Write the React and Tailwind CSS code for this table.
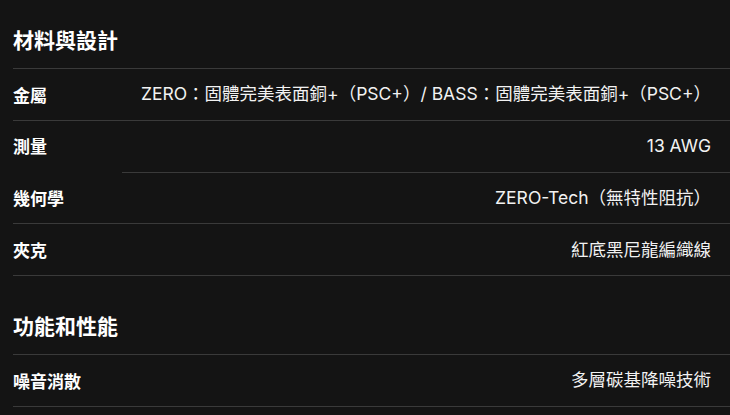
import React from 'react';

const sections = [
  {
    title: '材料與設計',
    rows: [
      { label: '金屬', value: 'ZERO：固體完美表面銅+（PSC+）/ BASS：固體完美表面銅+（PSC+）' },
      { label: '測量', value: '13 AWG' },
      { label: '幾何學', value: 'ZERO-Tech（無特性阻抗）', shortLine: true },
      { label: '夾克', value: '紅底黑尼龍編織線' }
    ]
  },
  {
    title: '功能和性能',
    rows: [{ label: '噪音消散', value: '多層碳基降噪技術' }]
  }
];

const font = { fontFamily: 'Inter, "Noto Sans CJK TC", sans-serif' };

const SpecRow = ({ label, value, shortLine }) => (
  <>
    <div
      className={`h-px bg-[#3a3a3a] ${shortLine ? 'ml-[109px]' : ''}`}
    />
    <div className="h-[50.75px] flex items-center justify-between pr-[19px]">
      <span className="text-[17px] font-bold text-white font-['Noto_Sans_CJK_TC',sans-serif]">
        {label}
      </span>
      <span className="text-[17.5px] text-[#f2f2f2] font-['Inter','Noto_Sans_CJK_TC',sans-serif]">
        {value}
      </span>
    </div>
  </>
);

export default function App() {
  return (
    <div className="w-[730px] h-[415px] bg-[#141414] overflow-hidden pl-[13px]" style={font}>
      {sections.map((section, i) => (
        <div key={section.title} className={i > 0 ? 'mt-[10px]' : ''}>
          <h2 className="pt-[25px] pb-[15px] text-[21px] leading-[28px] font-bold text-white font-['Noto_Sans_CJK_TC',sans-serif]">
            {section.title}
          </h2>
          {section.rows.map((row) => (
            <SpecRow key={row.label} {...row} />
          ))}
          <div className="h-px bg-[#3a3a3a]" />
        </div>
      ))}
    </div>
  );
}
